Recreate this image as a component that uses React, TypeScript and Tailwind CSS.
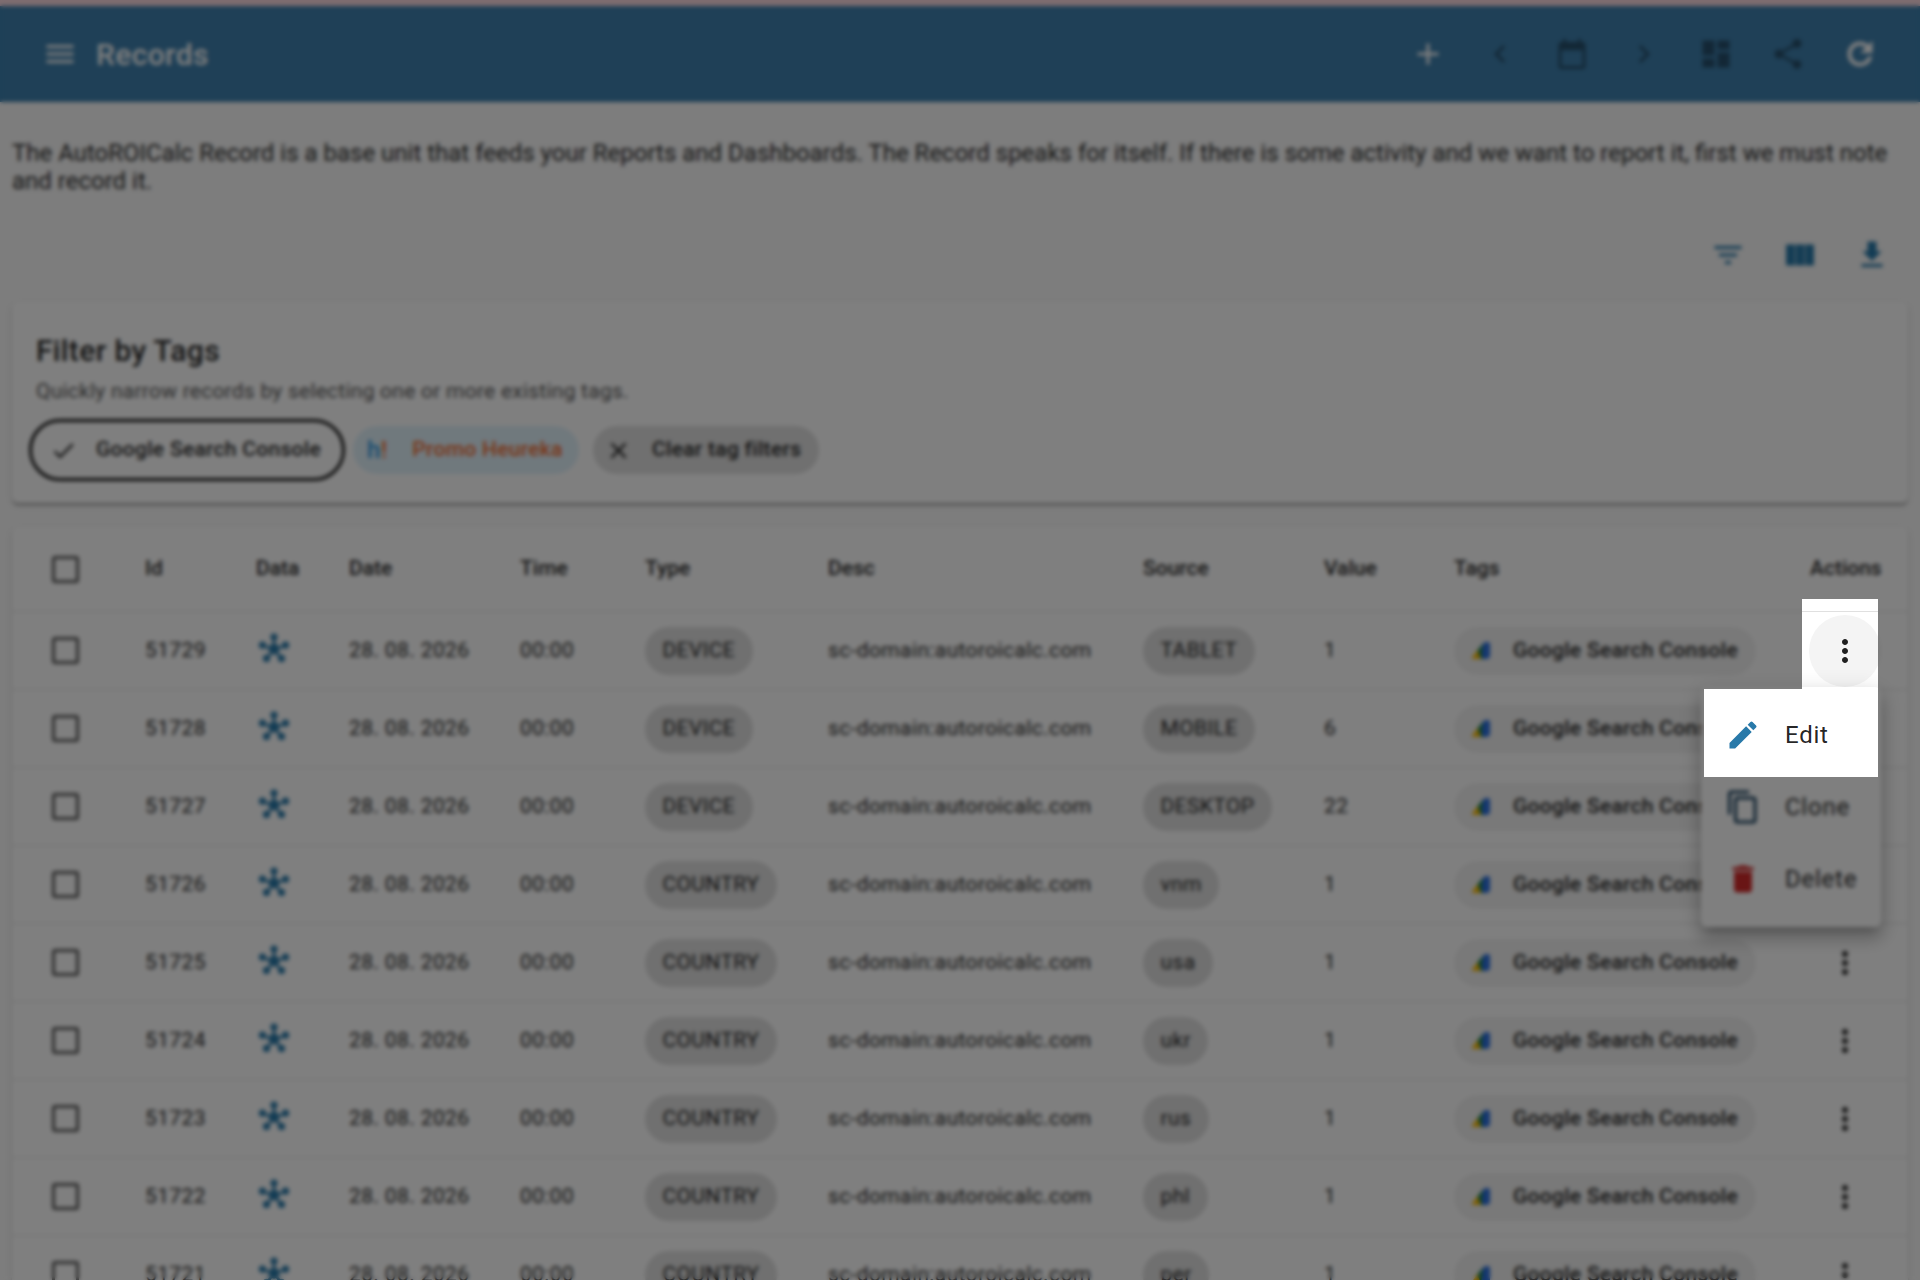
import {
  MdAdd,
  MdCheck,
  MdChevronLeft,
  MdChevronRight,
  MdClose,
  MdContentCopy,
  MdDashboard,
  MdDelete,
  MdEdit,
  MdFilterList,
  MdMenu,
  MdMoreVert,
  MdShare,
} from "react-icons/md";

const columns = ["Id", "Data", "Date", "Time", "Type", "Desc", "Source", "Value", "Tags", "Actions"];

const records = [
  { id: 51729, type: "DEVICE", source: "TABLET", value: 1 },
  { id: 51728, type: "DEVICE", source: "MOBILE", value: 6 },
  { id: 51727, type: "DEVICE", source: "DESKTOP", value: 22 },
  { id: 51726, type: "COUNTRY", source: "vnm", value: 1 },
  { id: 51725, type: "COUNTRY", source: "usa", value: 1 },
  { id: 51724, type: "COUNTRY", source: "ukr", value: 1 },
  { id: 51723, type: "COUNTRY", source: "rus", value: 1 },
  { id: 51722, type: "COUNTRY", source: "phl", value: 1 },
  { id: 51721, type: "COUNTRY", source: "per", value: 1 },
];

const rowGrid =
  "grid grid-cols-[133px_111px_93px_171px_125px_183px_315px_181px_130px_356px_1fr] items-center";

function CalendarIcon() {
  return (
    <svg viewBox="0 0 24 24" className="size-9 fill-current">
      <path d="M5 22a2 2 0 0 1-2-2V6a2 2 0 0 1 2-2h1V2h2v2h8V2h2v2h1a2 2 0 0 1 2 2v14a2 2 0 0 1-2 2zm0-2h14V9.5H5z" />
    </svg>
  );
}

function RefreshIcon() {
  return (
    <svg viewBox="0 0 24 24" className="size-9 fill-current stroke-current stroke-[0.7]">
      <path d="M17.65 6.35A7.96 7.96 0 0 0 12 4a8 8 0 1 0 7.73 10h-2.080A6 6 0 1 1 12 6c1.660 0 3.140.69 4.220 1.780L13 11h7V4z" />
    </svg>
  );
}

function ColumnsIcon() {
  return (
    <svg viewBox="0 0 24 24" className="size-9 fill-current">
      <path d="M2.7 5h5.900v14H2.7zM9.1 5H15v14H9.1zM15.500 5h5.800v14h-5.800z" />
    </svg>
  );
}

function DownloadIcon() {
  return (
    <svg viewBox="0 0 24 24" className="size-9 fill-current">
      <path d="M18.5 9.5H15V3H9v6.5H5.5L12 16zM5 18v2h14v-2z" />
    </svg>
  );
}

function HubIcon() {
  return (
    <svg viewBox="0 0 36 36" className="size-9 fill-[#2879a9] stroke-[#2879a9]">
      <path
        d="M18 16V5M18 16 6.5 13M18 16l11.5-3M18 16l-7.5 10M18 16l7.5 10"
        fill="none"
        strokeWidth="2.8"
      />
      <g stroke="none">
        <circle cx="18" cy="16" r="5.4" />
        <circle cx="18" cy="4" r="3.6" />
        <circle cx="6.5" cy="12.2" r="3.6" />
        <circle cx="29.5" cy="12.2" r="3.6" />
        <circle cx="10.5" cy="25.4" r="3.6" />
        <circle cx="25.5" cy="25.4" r="3.6" />
      </g>
    </svg>
  );
}

function GoogleAdsIcon() {
  return (
    <svg viewBox="0 0 18 18" className="size-[18px]">
      <path d="M0 15.5 5.5 8l4.5 9H1.5Q-.5 17 0 15.5z" fill="#fbbc04" />
      <path d="M5.5 8.5 11 1.5 12.500 17H9z" fill="#188038" />
      <path d="M10.5 4q.5-4 4-4h1Q18 0 18 2.500V13q0 4-4 4h-1.500q-3 0-3-4z" fill="#2a6fe0" />
    </svg>
  );
}

function Checkbox() {
  return <span className="ml-10 block size-[27px] rounded-[3px] border-3 border-[#5c5c5c]" />;
}

function Chip({ label }: { label: string }) {
  return (
    <span className="inline-flex h-12 items-center rounded-full bg-[#e0e0e0] px-[17.5px] text-black/87">
      {label}
    </span>
  );
}

export default function App() {
  return (
    <div className="relative h-[1280px] w-[1920px] overflow-hidden bg-[#fafafa] font-[Roboto,sans-serif] text-[21px] text-black/87">
      <div className="h-1.5 bg-[#fcd9e0]" />
      <header className="flex h-24 items-center bg-[#3e80ae] px-[42px] text-white">
        <MdMenu className="size-9" />
        <h1 className="ml-[18px] text-[30px] font-medium tracking-[0.35px]">Records</h1>
        <div className="ml-auto flex gap-9">
          <MdAdd className="size-9" />
          <MdChevronLeft className="size-9 text-black/38" />
          <span className="text-black/38">
            <CalendarIcon />
          </span>
          <MdChevronRight className="size-9 text-black/38" />
          <MdDashboard className="size-9 text-black/38" />
          <MdShare className="size-9 text-black/38" />
          <RefreshIcon />
        </div>
      </header>

      <main className="px-3">
        <p className="mt-[37px] text-[24px] leading-7">
          The AutoROICalc Record is a base unit that feeds your Reports and Dashboards. The Record
          speaks for itself. If there is some activity and we want to report it, first we must note
          and record it.
        </p>
        <div className="mt-[42px] flex justify-end gap-9 pr-[18px] text-[#2879a9]">
          <MdFilterList className="size-9" />
          <ColumnsIcon />
          <DownloadIcon />
        </div>

        <section className="mt-[29px] h-[201px] rounded-md bg-white px-6 shadow-[0_3px_2px_-1px_rgba(0,0,0,0.2),0_2px_2px_rgba(0,0,0,0.14),0_2px_5px_rgba(0,0,0,0.12)]">
          <h2 className="pt-[31px] text-[30px] leading-9 font-medium tracking-[0.35px]">
            Filter by Tags
          </h2>
          <p className="mt-2 leading-7 tracking-[0.24px] text-black/70">
            Quickly narrow records by selecting one or more existing tags.
          </p>
          <div className="mt-[21px] flex gap-[15px] font-medium tracking-[0.29px]">
            <span className="flex h-12 w-[302px] items-center rounded-full outline-3 outline-offset-[4px] outline-[#111]">
              <MdCheck className="ml-[14px] size-[27px]" />
              <span className="ml-[19px]">Google Search Console</span>
            </span>
            <span className="flex h-12 w-[226px] items-center rounded-full bg-[#e1f2fb] text-[#f2682a]">
              <span className="ml-[14px] text-2xl">
                <span className="text-[#2b96e0]">h</span>!
              </span>
              <span className="ml-[25px]">Promo Heureka</span>
            </span>
            <span className="-ml-px flex h-12 w-[226px] items-center rounded-full bg-[#e0e0e0]">
              <MdClose className="ml-3 size-[27px]" />
              <span className="ml-5">Clear tag filters</span>
            </span>
          </div>
        </section>

        <section className="mt-6 rounded-md bg-white shadow-[0_3px_2px_-1px_rgba(0,0,0,0.2),0_2px_2px_rgba(0,0,0,0.14),0_2px_5px_rgba(0,0,0,0.12)]">
          <div className={`${rowGrid} h-[85px] border-b border-black/12 font-medium`}>
            <Checkbox />
            {columns.map((column) => (
              <span key={column}>{column}</span>
            ))}
          </div>
          {records.map((record, i) => (
            <div
              key={record.id}
              className={`${rowGrid} h-[78px] border-b border-black/12 tracking-[0.375px]`}
            >
              <Checkbox />
              <span>{record.id}</span>
              <HubIcon />
              <span>28. 08. 2026</span>
              <span>00:00</span>
              <span>
                <Chip label={record.type} />
              </span>
              <span>sc-domain:autoroicalc.com</span>
              <span>
                <Chip label={record.source} />
              </span>
              <span>{record.value}</span>
              <span className="flex h-12 w-[302px] items-center rounded-full bg-[#f2f2f2] pl-[18px]">
                <GoogleAdsIcon />
                <span className="ml-[23px] font-medium tracking-[0.29px]">
                  Google Search Console
                </span>
              </span>
              <span
                className={`-ml-px flex size-[72px] items-center justify-center rounded-full ${i === 0 ? "bg-[#f4f4f4]" : ""}`}
              >
                <MdMoreVert className="size-9" />
              </span>
            </div>
          ))}
        </section>
      </main>

      {/* row actions menu */}
      <div className="absolute top-[687px] left-[1701px] h-60 w-[180px] rounded-md bg-white py-3 text-2xl tracking-[0.75px] shadow-[0_8px_8px_-5px_rgba(0,0,0,0.2),0_12px_15px_2px_rgba(0,0,0,0.14),0_5px_21px_3px_rgba(0,0,0,0.12)]">
        <div className="flex h-[72px] items-center gap-6 pl-6">
          <MdEdit className="size-9 text-[#2879a9]" />
          Edit
        </div>
        <div className="flex h-[72px] items-center gap-6 pl-6">
          <MdContentCopy className="size-9 text-[#1a4260]" />
          Clone
        </div>
        <div className="flex h-[72px] items-center gap-6 pl-6">
          <MdDelete className="size-9 text-[#d32a2a]" />
          Delete
        </div>
      </div>

      {/* tour backdrop, open around the menu button and the Edit item */}
      <div className="absolute inset-0 bg-black/50 backdrop-blur-[2px] [clip-path:polygon(0_0,1920px_0,1920px_1280px,0_1280px,0_777px,1878px_777px,1878px_599px,1802px_599px,1802px_689px,1704px_689px,1704px_777px,0_777px)]" />
    </div>
  );
}
